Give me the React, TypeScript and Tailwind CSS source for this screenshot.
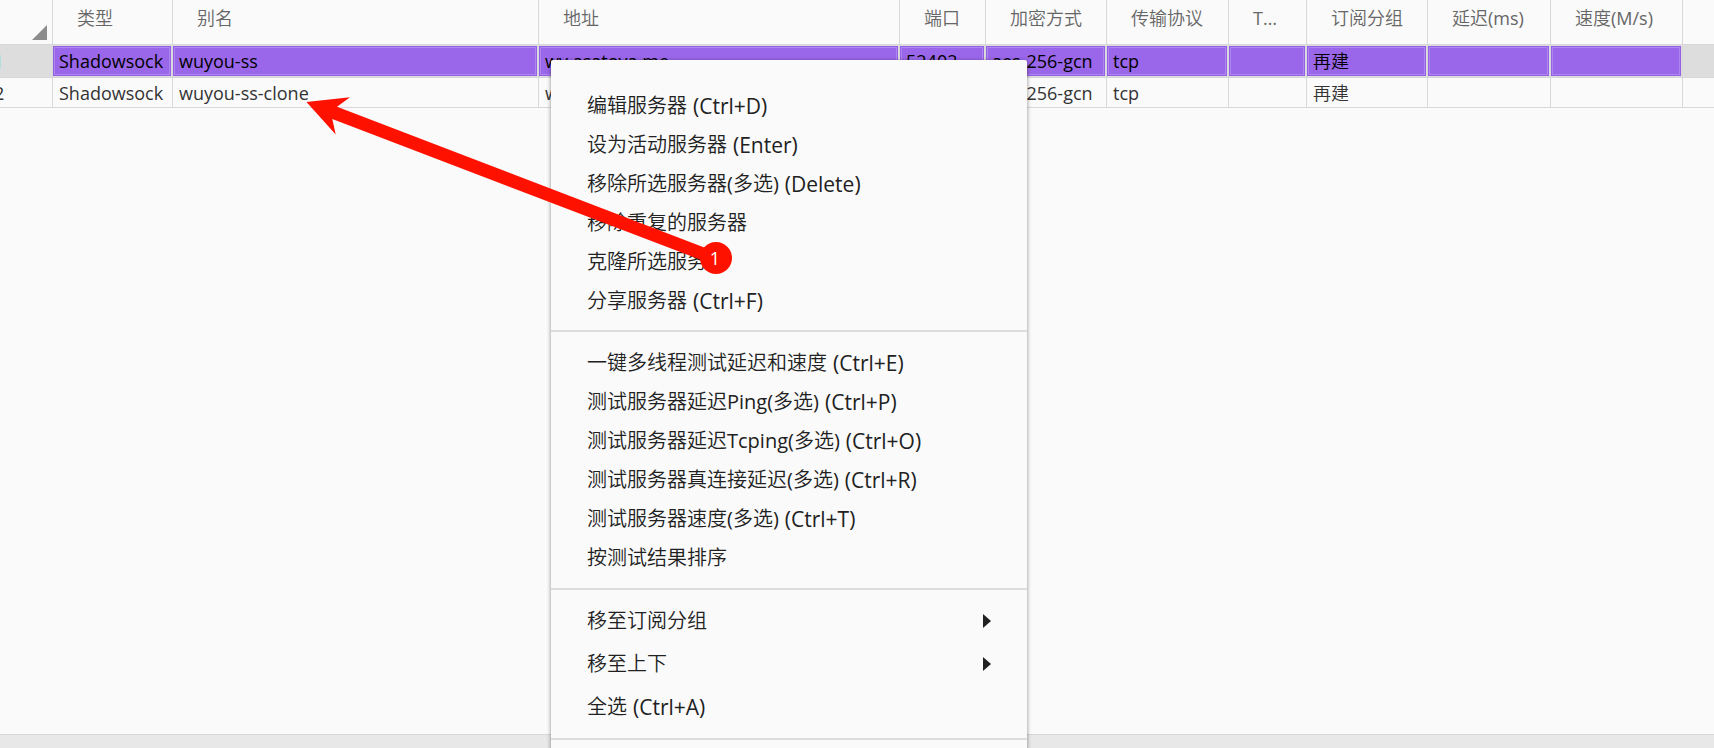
import clsx from "clsx"

type Column = { key: string; label: string; width: string }

const columns: Column[] = [
	{ key: "type", label: "类型", width: "w-[120px]" },
	{ key: "remarks", label: "别名", width: "w-[366px]" },
	{ key: "address", label: "地址", width: "w-[361px]" },
	{ key: "port", label: "端口", width: "w-[86px]" },
	{ key: "security", label: "加密方式", width: "w-[121px]" },
	{ key: "network", label: "传输协议", width: "w-[122px]" },
	{ key: "tls", label: "TLS", width: "w-[78px]" },
	{ key: "group", label: "订阅分组", width: "w-[121px]" },
	{ key: "delay", label: "延迟(ms)", width: "w-[123px]" },
	{ key: "speed", label: "速度(M/s)", width: "w-[132px]" },
]

const server = {
	type: "Shadowsock",
	address: "wy.asatoya.me",
	port: "52402",
	security: "aes-256-gcn",
	network: "tcp",
	group: "再建",
}

const rows: Record<string, string>[] = [
	{ ...server, remarks: "wuyou-ss" },
	{ ...server, remarks: "wuyou-ss-clone" },
]

type Item = { label: string; hotkey?: string }

const serverItems: Item[] = [
	{ label: "编辑服务器", hotkey: "(Ctrl+D)" },
	{ label: "设为活动服务器", hotkey: "(Enter)" },
	{ label: "移除所选服务器(多选)", hotkey: "(Delete)" },
	{ label: "移除重复的服务器" },
	{ label: "克隆所选服务器" },
	{ label: "分享服务器", hotkey: "(Ctrl+F)" },
]

const testItems: Item[] = [
	{ label: "一键多线程测试延迟和速度", hotkey: "(Ctrl+E)" },
	{ label: "测试服务器延迟Ping(多选)", hotkey: "(Ctrl+P)" },
	{ label: "测试服务器延迟Tcping(多选)", hotkey: "(Ctrl+O)" },
	{ label: "测试服务器真连接延迟(多选)", hotkey: "(Ctrl+R)" },
	{ label: "测试服务器速度(多选)", hotkey: "(Ctrl+T)" },
	{ label: "按测试结果排序" },
]

const ServerTable = () => (
	<table className="-ml-2 w-[calc(100%+8px)] table-fixed border-separate border-spacing-0 text-left text-[18px] leading-6 whitespace-nowrap">
		<thead>
			<tr className="h-[45px] text-[#666]">
				<th className="w-[61px] border-r border-b border-[#d8d8d8] p-0 pr-[5px] pb-1 align-bottom" aria-label="全选">
					<svg className="ml-auto block" width="15" height="15" viewBox="0 0 15 15">
						<path d="M15 0V15H0Z" fill="#8c8c8c" />
					</svg>
				</th>
				{columns.map((col) => (
					<th key={col.key} className={clsx(col.width, "truncate border-r border-b border-[#d8d8d8] p-0 px-6 pb-2 font-normal")}>
						{col.label}
					</th>
				))}
				<th className="border-b border-[#d8d8d8] p-0" />
			</tr>
		</thead>
		<tbody>
			{rows.map((row, i) => {
				const selected = i === 0
				return (
					<tr key={row.remarks} className={selected ? "bg-[#ddd] text-black" : "text-[#333]"}>
						<th className={clsx("border-r border-b border-[#d8d8d8] p-0 pl-0.5 font-normal", selected && "text-[#a5e0e0]")}>{i + 1}</th>
						{columns.map((col) => (
							<td key={col.key} className={clsx("border-r border-b border-[#d8d8d8] p-0", selected && "pt-px pr-px pb-px")}>
								{selected ? (
									<div className="border border-[#9460e6] bg-[#9a67ea]">
										<div className="h-7 overflow-hidden border border-[#ad85ee] px-1 pt-px">{row[col.key]}</div>
									</div>
								) : (
									<div className="h-[29px] overflow-hidden px-1.5 pt-[3px]">{row[col.key]}</div>
								)}
							</td>
						))}
						<td className="border-b border-[#d8d8d8] p-0" />
					</tr>
				)
			})}
		</tbody>
	</table>
)

const MenuItem = ({ label, hotkey, tall, submenu }: Item & { tall?: boolean; submenu?: boolean }) => (
	<button
		type="button"
		role="menuitem"
		className={clsx("flex w-full items-center px-9 text-left leading-7 hover:bg-[#eee]", tall ? "h-[43px]" : "h-[39px]")}>
		<span>{label}</span>
		{hotkey && <span className="ml-1.5 text-[21px]">{hotkey}</span>}
		{submenu && (
			<svg className="ml-auto" width="8" height="14" viewBox="0 0 8 14">
				<path d="M0 0L8 7L0 14Z" fill="#212121" />
			</svg>
		)}
	</button>
)

const Separator = () => <hr className="border-t-2 border-[#ddd]" />

const ContextMenu = () => (
	<div role="menu" className="absolute top-[60px] left-[551px] w-[476px] rounded-xs bg-[#fafafa] pt-[26px] pb-10 text-[20px] whitespace-nowrap text-[#212121] shadow-[0_1px_4px_rgba(0,0,0,0.45)]">
		<div className="pb-2.5">
			{serverItems.map((item) => (
				<MenuItem key={item.label} {...item} />
			))}
		</div>
		<Separator />
		<div className="py-[11px]">
			{testItems.map((item) => (
				<MenuItem key={item.label} {...item} />
			))}
		</div>
		<Separator />
		<div className="pt-[9px] pb-2.5">
			<MenuItem label="移至订阅分组" tall submenu />
			<MenuItem label="移至上下" tall submenu />
			<MenuItem label="全选" hotkey="(Ctrl+A)" tall />
		</div>
		<Separator />
	</div>
)

// Step marker that points from the clone command to the new row
const Annotation = () => (
	<div className="pointer-events-none absolute top-[90px] left-[300px]">
		<svg width="440" height="190" viewBox="300 90 440 190">
			<path d="M306.5 102L350 97.3L337 106.7L716 252L713 264.5L332.3 119L335.7 134.5Z" fill="#ff1100" />
			<circle cx="716" cy="258" r="16" fill="#ff1100" />
			<text x="715" y="265" textAnchor="middle" fontSize="18" fill="#fff">
				1
			</text>
		</svg>
	</div>
)

const App = () => (
	<div className="relative flex h-screen flex-col overflow-hidden bg-[#fafafa] font-['Open_Sans','Noto_Sans_CJK_SC_DemiLight','Noto_Sans_CJK_SC_Light','Noto_Sans_CJK_SC',sans-serif]">
		<main className="flex-1 overflow-hidden">
			<ServerTable />
		</main>
		<footer className="h-3.5 border-t border-[#d8d8d8] bg-[#e8e8e8]" />
		<ContextMenu />
		<Annotation />
	</div>
)

export default App
